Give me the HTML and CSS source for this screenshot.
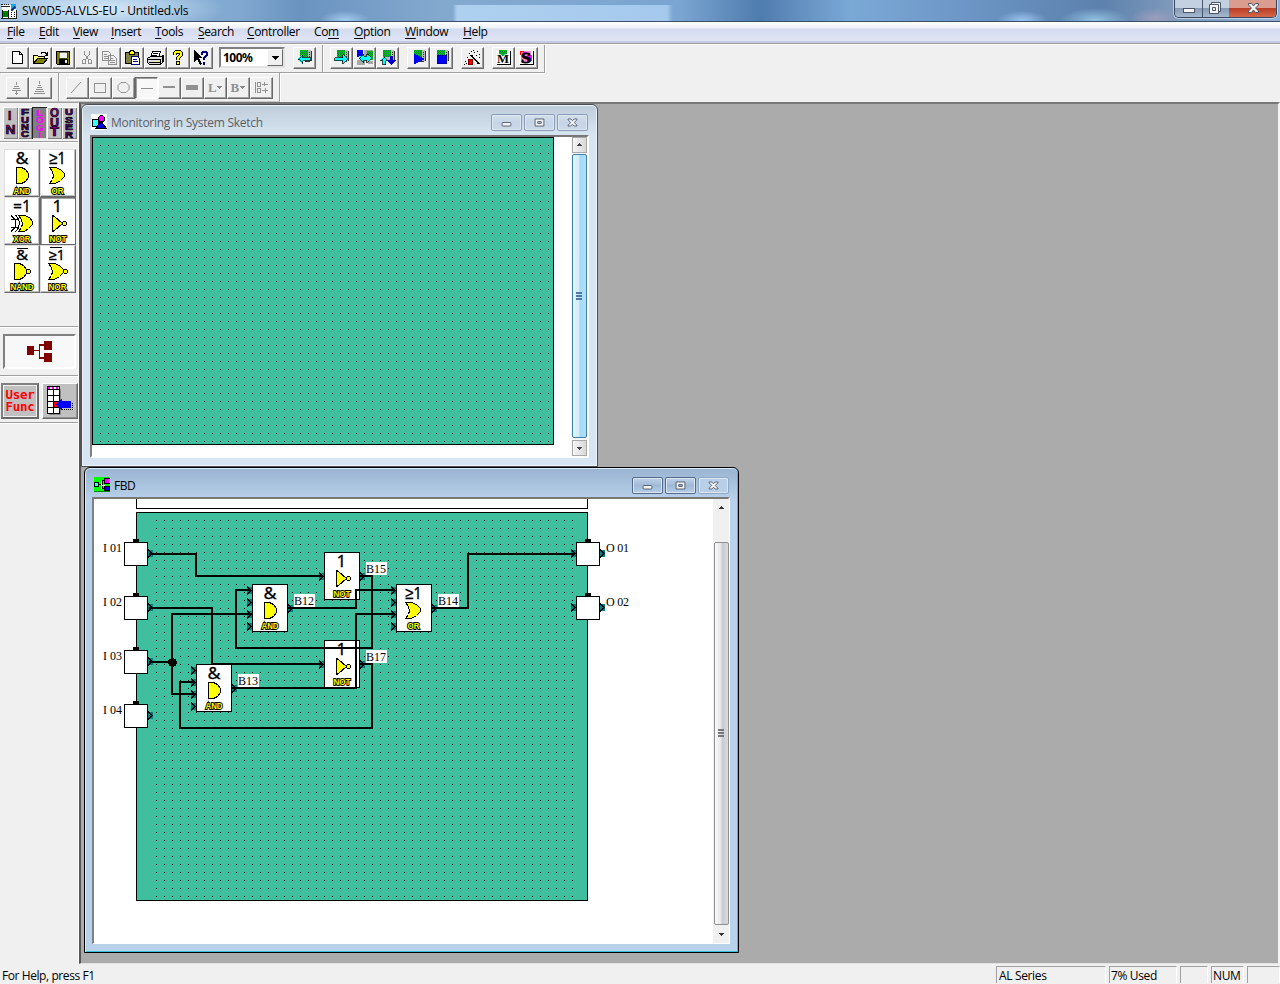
FILE: index.html
```html
<!DOCTYPE html>
<html lang="en">
<head>
<meta charset="utf-8">
<title>SW0D5-ALVLS-EU - Untitled.vls</title>
<link rel="stylesheet" href="styles.css">
</head>
<body>
<svg class="defs" width="0" height="0">
  <defs>
    <pattern id="dots1" x="8" y="8" width="8" height="8" patternUnits="userSpaceOnUse"><rect width="1" height="1"/></pattern>
    <pattern id="dots2" x="156" y="520" width="8" height="8" patternUnits="userSpaceOnUse"><rect width="1" height="1"/></pattern>
    <pattern id="dither" width="2" height="2" patternUnits="userSpaceOnUse"><path d="M0 0h2v2H0z" fill="#00c800"/><path d="M0 0h1v1H0zM1 1h1v1H1z" fill="#008040"/></pattern>
    <symbol id="g-and" viewBox="0 0 36 48">
      <text class="op" x="11.500" y="15" textLength="13" lengthAdjust="spacingAndGlyphs">&amp;</text>
      <path class="gate" d="M12.500 18.500h5l4 2 3 4v4l-3 4-4 2h-5z"/>
      <text class="gname" x="9.500" y="45" textLength="17" lengthAdjust="spacingAndGlyphs">AND</text>
    </symbol>
    <symbol id="g-or" viewBox="0 0 36 48">
      <text class="op" x="9" y="15" textLength="17" lengthAdjust="spacingAndGlyphs">≥1</text>
      <path class="gate" d="M9.500 18.500h6l5 2 4 4v3l-4 4-5 3h-6l3-4 1-4-1-4z"/>
      <text class="gname" x="11.500" y="45" textLength="12" lengthAdjust="spacingAndGlyphs">OR</text>
    </symbol>
    <symbol id="g-xor" viewBox="0 0 36 48">
      <text class="op" x="9" y="15" textLength="18" lengthAdjust="spacingAndGlyphs">=1</text>
      <path class="gate" d="M14.500 18.500h6l5 2 3 4v3l-4 4-4 3h-6l3-4 1-4-1-4z"/>
      <path class="ln" d="M7 18.500l4 4M11 22v9M11 30.500l-4 4M11.500 18l3 4 1 4-1 5-3 4M7 22.500h8M7 30.500h8"/>
      <text class="gname" x="9.500" y="45" textLength="17" lengthAdjust="spacingAndGlyphs">XOR</text>
    </symbol>
    <symbol id="g-not" viewBox="0 0 36 48">
      <text class="op" x="12.500" y="15">1</text>
      <path class="gate" d="M12.500 18.500l2 1 8 7-8 7-2 1z"/><circle class="gate" cx="24.500" cy="26.500" r="2"/>
      <text class="gname" x="9.500" y="45" textLength="17" lengthAdjust="spacingAndGlyphs">NOT</text>
    </symbol>
    <symbol id="g-nand" viewBox="0 0 36 48">
      <text class="op ops" x="12" y="15" textLength="12" lengthAdjust="spacingAndGlyphs">&amp;</text><path class="ln" d="M13 3.500h11"/>
      <path class="gate" d="M10.500 18.500h5l4 2 3 4v4l-3 4-4 2h-5z"/><circle class="gate" cx="24.500" cy="26.500" r="2"/>
      <text class="gname" x="6.500" y="45" textLength="23" lengthAdjust="spacingAndGlyphs">NAND</text>
    </symbol>
    <symbol id="g-nor" viewBox="0 0 36 48">
      <text class="op ops" x="9" y="15" textLength="16" lengthAdjust="spacingAndGlyphs">≥1</text><path class="ln" d="M10 2.500h12"/>
      <path class="gate" d="M8.500 18.500h6l5 2 4 4v3l-4 4-5 3h-6l3-4 1-4-1-4z"/><circle class="gate" cx="25.500" cy="26.500" r="2"/>
      <text class="gname" x="8.500" y="45" textLength="18" lengthAdjust="spacingAndGlyphs">NOR</text>
    </symbol>
    <symbol id="pin" viewBox="0 0 5 9"><path d="M0 1h5v7H0z" fill="#008080"/><path d="M0 0h1v1h1v1h1v1h1v1h1v1H4v1H3v1H2v1H1v1H0V7h1V6h1V5h1V4H2V3H1V2H0z"/></symbol>
    <symbol id="term" viewBox="0 0 24 28"><rect x="9" y="0" width="6" height="4"/><rect x=".5" y="3.500" width="23" height="23" fill="#fff" stroke="#000"/></symbol>
    <symbol id="plc" viewBox="0 0 23 22"><path d="M8 3h8v7H8z" fill="url(#dither)"/><path d="M16 3h3v11h-9v-4h6z" fill="#b8b8b8"/><path d="M17 5h1v1h-1zM17 7h1v1h-1zM17 9h1v1h-1zM17 11h1v1h-1zM19 4h1v10h-2v1h-5v-1h6z" fill="#333"/></symbol>
    <symbol id="wmin" viewBox="0 0 31 17"><rect x="10.500" y="8.500" width="10" height="4" rx="1" class="wg"/></symbol>
    <symbol id="wmax" viewBox="0 0 31 17"><path class="wg" fill-rule="evenodd" d="M10.500 4.500h10v8h-10zM13.500 7.500v2h4v-2z"/></symbol>
    <symbol id="wx" viewBox="0 0 31 17"><path class="wg" d="M10.500 4.500h3l2 2 2-2h3v1l-3 3 3 3v1h-3l-2-2-2 2h-3v-1l3-3-3-3z"/></symbol>
  </defs>
</svg>

<header class="titlebar">
  <svg class="appicon" width="16" height="16" viewBox="0 0 16 16"><path d="M1 1h14v13H1z" fill="#fff"/><path d="M0 0h2v1H0zM3 0h1v1H3zM5 0h1v1H5zM7 0h1v1H7zM0 2h9v1H0zM0 14h15V6h1v9H0z" fill="#222"/><path d="M2 7h5v6H2z" fill="#008000"/><path d="M7.500 6v8M1.500 6v8" stroke="#111"/><path d="M10 0h5v5h-5z" fill="#09aee0"/><path d="M9 6l5-5 1 3-4 3z" fill="#00388c"/><path d="M10 8h1v1h-1zM10 10h1v1h-1zM13 8h1v1h-1zM13 10h1v1h-1zM10 12h1v1h-1zM13 12h1v1h-1z"/></svg>
  <span class="apptitle">SW0D5-ALVLS-EU - Untitled.vls</span>
  <div class="winctl">
    <span class="c1"><svg width="27" height="17" viewBox="0 0 27 17"><rect x="8.500" y="8.500" width="11" height="4" class="wg"/></svg></span>
    <span class="c2"><svg width="26" height="17" viewBox="0 0 26 17"><path class="wg" d="M8.500 2.500h9v9h-9z"/><path class="wg" fill-rule="evenodd" d="M6.500 4.500h9v9h-9zM9.500 7.500v3h3v-3z"/></svg></span>
    <span class="c3"><svg width="47" height="17" viewBox="0 0 47 17"><path class="wg" d="M19.500 3.500h3l2 2.500 2-2.500h3v1.500l-3 3 3 3v1.500h-3l-2-2.500-2 2.500h-3V11l3-3-3-3z"/></svg></span>
  </div>
</header>

<nav class="menu">
  <span><u>F</u>ile</span><span><u>E</u>dit</span><span><u>V</u>iew</span><span><u>I</u>nsert</span><span><u>T</u>ools</span><span><u>S</u>earch</span><span><u>C</u>ontroller</span><span>Co<u>m</u></span><span><u>O</u>ption</span><span><u>W</u>indow</span><span><u>H</u>elp</span>
</nav>

<div class="bar bar1">
  <div class="grp">
    <i class="tb"><svg viewBox="0 0 23 22"><path d="M6.500 4.500h7l3 3v9h-10z" fill="#fff" stroke="#000"/><path d="M13.500 4.500v3h3" class="ln"/></svg></i>
    <i class="tb"><svg viewBox="0 0 23 22"><path d="M4.500 16V8.500h4l1 1h6v2" fill="#ff8" stroke="#000"/><path d="M4.500 16.500l4-5h10l-4 5z" fill="#808000" stroke="#000"/><path class="ln" d="M12 6.500l1-1h3l2 2M18.500 5v3h-3"/></svg></i>
    <i class="tb"><svg viewBox="0 0 23 22"><path d="M4.500 4.500h13v13h-12l-1-1z" fill="#808000" stroke="#000"/><path d="M7 5h8v6H7z" fill="#f0f0f0" stroke="#000" stroke-width=".5"/><path d="M7 12h9v5H7z"/><path d="M13 13h2v3h-2z" fill="#eee"/></svg></i>
    <i class="tb"><svg viewBox="0 0 23 22"><path class="gl" d="M9.500 4v3l4 6M14.500 4v3l-4 6M8.500 12.500h2v4h-3v-3zM13.500 12.500h2l1 1v3h-3z"/></svg></i>
    <i class="tb"><svg viewBox="0 0 23 22"><path class="gl" fill="#eee" d="M4.500 4.500h6l2 2v7h-8zM10.500 8.500h5l3 3v6h-8zM6 7.500h3M6 9.500h4M6 11.500h4M12 11.500h3M12 13.500h5M12 15.500h5"/></svg></i>
    <i class="tb"><svg viewBox="0 0 23 22"><path d="M4.500 5.500h13v11h-13z" fill="#808040" stroke="#000"/><path d="M8.500 5.500l1-2h3l1 2v2h-5z" fill="#ff0" stroke="#000"/><path d="M10.500 9.500h6l2 2v6h-8z" fill="#fff" stroke="#000080"/><path d="M12 12.500h4M12 14.500h5" stroke="#000080"/></svg></i>
    <i class="tb"><svg viewBox="0 0 23 22"><path d="M8.500 4.500h8l-2 6h-8z" fill="#fff" stroke="#000"/><path d="M3.500 11.500l3-2h11l2-1v6l-3 3h-11l-2-2z" fill="#ddd" stroke="#000"/><path class="ln" d="M4 12.500h12M5 15.500h12M9 6.500h5M8 8.500h5M16.500 12v5M18.500 9v6"/><path d="M11 14h3v1h-3z" fill="#ff0"/></svg></i>
    <i class="tb"><svg viewBox="0 0 23 22"><path d="M8 8V6l1-1h4l1 1v2l-3 3v2" fill="none" stroke="#000" stroke-width="3.500"/><path d="M8 8V6l1-1h4l1 1v2l-3 3v2" fill="none" stroke="#ff0" stroke-width="1.500"/><path d="M9 14h4v4H9z"/><path d="M10 15h2v2h-2z" fill="#ff0"/></svg></i>
    <i class="tb"><svg viewBox="0 0 23 22"><path d="M4 3v12l3-3 3 6 2-1-3-6h4z"/><path d="M12 8V6l1-1h3l1 1v2l-3 3v2M14 14.500v3" fill="none" stroke="#000080" stroke-width="2.400"/></svg></i>
    <div class="combo"><b>100%</b><i><svg width="15" height="16" viewBox="0 0 15 16"><path d="M4 6h7l-3.500 4z"/></svg></i></div>
    <i class="tb"><svg viewBox="0 0 23 22"><use href="#plc" x="-1" width="23" height="22"/><path class="cy" d="M4.500 12l5-4.500v3h8v3h-8v3z"/></svg></i>
  </div>
  <div class="grp g2">
    <i class="tb"><svg viewBox="0 0 23 22"><use href="#plc" x="-1" width="23" height="22"/><path class="cy" d="M17.500 12l-5-4.500v3h-8v3h8v3z"/></svg></i>
    <i class="tb"><svg viewBox="0 0 23 22"><path d="M4 3h6v5l-5 2H4z" fill="#00f"/><path d="M11 3h9v6h-9zM4 13h8v5H4zM15 14h5v3h-5z" fill="#a8a8a8"/><path d="M14 4h6v9h-6z" fill="url(#dither)"/><path class="cy" d="M5.500 11l5-4v2h3V7l5 4-5 5v-3h-3v3z"/></svg></i>
    <i class="tb"><svg viewBox="0 0 23 22"><use href="#plc" x="-1" width="23" height="22"/><path class="cy" d="M8 9.500l-4 4h2.500v4h3v-4H12z"/><path d="M14 9h3v4h3l-4.500 5-4.500-5h3z" fill="#00c"/></svg></i>
    <i class="tb s8"><svg viewBox="0 0 23 22"><use href="#plc" x="-1" width="23" height="22"/><path d="M6.500 6l11 6-11 6z" fill="#00f"/></svg></i>
    <i class="tb"><svg viewBox="0 0 23 22"><use href="#plc" x="-1" width="23" height="22"/><path d="M7.500 8.500h9v8h-9z" fill="#00f" stroke="#00a" /></svg></i>
    <i class="tb s8"><svg viewBox="0 0 23 22"><path d="M7.500 12.500h4v5h-4z" fill="red" stroke="#800000"/><path d="M10 8l8 9" stroke="#000" stroke-width="1.600"/><path d="M8 6h1v1H8zM10 4h1v1h-1zM13 5h1v1h-1zM16 4h1v1h-1zM15 8h1v1h-1zM18 7h1v1h-1zM18 10h1v1h-1zM6 10h1v1H6zM4 14h1v1H4zM5 16h1v1H5zM3 17h1v1H3zM12 3h1v1h-1z"/></svg></i>
    <i class="tb s8"><svg viewBox="0 0 23 22"><path d="M4 4h14v13H4z" fill="#fff"/><path d="M7 3h8v6H7z" fill="url(#dither)"/><path d="M18 4h1v14H5v-1h13z"/><text x="5" y="16" class="ms" textLength="12" lengthAdjust="spacingAndGlyphs">M</text></svg></i>
    <i class="tb"><svg viewBox="0 0 23 22"><path d="M4 4h14v13H4z" fill="#fff"/><path d="M6 4h10v11H6z" fill="#f8c"/><path d="M12 8h5v6h-5zM8 5h4v2H8z" fill="#f0f"/><path d="M5.500 8V4.500H9" stroke="#f00" fill="none"/><path d="M18 4h1v14H5v-1h13z"/><text x="6" y="16" class="ms big" textLength="10" lengthAdjust="spacingAndGlyphs">S</text></svg></i>
  </div>
</div>

<div class="bar bar2">
  <div class="grp">
    <i class="tb"><svg viewBox="0 0 23 22"><path class="gl" d="M10.500 5v3M8 9.500h5M7 11.500h7M6 13.500h9M10.500 14v4M9 16.500h3"/></svg></i>
    <i class="tb"><svg viewBox="0 0 23 22"><path class="gl" d="M10.500 4v3M9 8.500h3M8 10.500h5M7 12.500h7M6 14.500h9M5 16.500h11"/></svg></i>
  </div>
  <div class="grp g2">
    <i class="tb"><svg viewBox="0 0 23 22"><path class="gl aa" d="M5 16L15 5"/></svg></i>
    <i class="tb"><svg viewBox="0 0 23 22"><path class="gl" d="M5.500 6.500h11v9h-11z"/></svg></i>
    <i class="tb"><svg viewBox="0 0 23 22"><path class="gl aa" d="M9 5.500h5l3 3v4l-3 3H9l-3-3v-4z"/></svg></i>
    <i class="tb on"><svg viewBox="0 0 23 22"><path class="gl" d="M6 11.500h12"/></svg></i>
    <i class="tb"><svg viewBox="0 0 23 22"><path class="gl" d="M5 10h12" stroke-width="2"/></svg></i>
    <i class="tb"><svg viewBox="0 0 23 22"><path class="gl" d="M5 10.500h12" stroke-width="5"/></svg></i>
    <i class="tb"><svg viewBox="0 0 23 22"><text class="lb" x="4" y="15">L</text><path d="M13 9h5l-2.500 3z" fill="#888"/></svg></i>
    <i class="tb"><svg viewBox="0 0 23 22"><text class="lb" x="3.500" y="15">B</text><path d="M13 9h5l-2.500 3z" fill="#888"/></svg></i>
    <i class="tb"><svg viewBox="0 0 23 22"><path class="gl" d="M5.500 5v11M7.500 5.500h3v4h-3zM7.500 11.500h3v4h-3zM12 7.500h6M12 13.500h6M14.500 5v4M15.500 11v5"/></svg></i>
  </div>
</div>

<main>
  <aside>
    <div class="tabs">
      <svg width="15" height="32" viewBox="0 0 15 32"><text class="m" x="5" y="13" >I</text><text class="m" x="2.500" y="27" textLength="10" lengthAdjust="spacingAndGlyphs">N</text></svg>
      <svg width="14" height="32" viewBox="0 0 14 32"><text x="3" y="8" textLength="8" lengthAdjust="spacingAndGlyphs">F</text><text x="3" y="15.500" textLength="8" lengthAdjust="spacingAndGlyphs">U</text><text x="3" y="23" textLength="8" lengthAdjust="spacingAndGlyphs">N</text><text x="3" y="30" textLength="8" lengthAdjust="spacingAndGlyphs">C</text></svg>
      <svg class="sel" width="15" height="32" viewBox="0 0 15 32"><text x="4" y="8.500" textLength="8" lengthAdjust="spacingAndGlyphs">L</text><text x="4" y="16" textLength="8" lengthAdjust="spacingAndGlyphs">O</text><text x="4" y="23.500" textLength="8" lengthAdjust="spacingAndGlyphs">G</text><text x="6.500" y="31">I</text></svg>
      <svg width="15" height="32" viewBox="0 0 15 32"><text class="m" x="3" y="10" textLength="9" lengthAdjust="spacingAndGlyphs">O</text><text class="m" x="3" y="19.500" textLength="9" lengthAdjust="spacingAndGlyphs">U</text><text class="m" x="3" y="29" textLength="9" lengthAdjust="spacingAndGlyphs">T</text></svg>
      <svg width="15" height="32" viewBox="0 0 15 32"><text x="3" y="8" textLength="8" lengthAdjust="spacingAndGlyphs">U</text><text x="3" y="15.500" textLength="8" lengthAdjust="spacingAndGlyphs">S</text><text x="3" y="23" textLength="8" lengthAdjust="spacingAndGlyphs">E</text><text x="3" y="30.500" textLength="8" lengthAdjust="spacingAndGlyphs">R</text></svg>
    </div>
    <div class="palette">
      <div><svg><use href="#g-and"/></svg></div><div><svg><use href="#g-or"/></svg></div>
      <div><svg><use href="#g-xor"/></svg></div><div class="on"><svg><use href="#g-not"/></svg></div>
      <div><svg><use href="#g-nand"/></svg></div><div><svg><use href="#g-nor"/></svg></div>
    </div>
    <div class="tree"><div><svg width="69" height="31" viewBox="1 1 69 31"><g fill="#800000"><path d="M23 11h7v9h-7zM40 6h8v9h-8zM40 18h8v9h-8z"/><path d="M30 15h6v1h-6zM35 9h5v2h-4v11h4v2h-5z"/></g></svg></div></div>
    <div class="user">
      <div class="uf">User<br>Func</div>
      <div class="tbl"><svg width="33" height="32" viewBox="0 0 33 32"><path d="M6 5h12v26H6z" fill="#888"/><path d="M4.500 2.500h12v27h-12z" fill="#fff" stroke="#000"/><path class="ln" d="M4 5.500h13M4 11.500h13M4 17.500h13M4 23.500h13M10.500 5v24"/><path d="M5 3h2v2H5zM9 3h2v2H9zM13 3h2v2h-2z" fill="#f0f"/><path d="M11 18h5v5h-5z" fill="red"/><path d="M13 20.500l6-6.500v3h9v7h-9v3z" fill="#00f"/><path d="M19 25.500h10V18" fill="none" stroke="#000" stroke-dasharray="1 1"/></svg></div>
    </div>
  </aside>

  <section class="desk">
    <div class="win w1">
      <div class="wt"><svg width="16" height="16" viewBox="0 0 16 16"><path d="M0 0h16v16H0z" fill="#fff"/><circle cx="10.500" cy="4.500" r="3" fill="#f0f" stroke="#000"/><path d="M1.500 5.500h6v7h-6z" fill="#3ff" stroke="#000"/><path d="M10 7l5 7H5z" fill="#00d" stroke="#000"/></svg><span>Monitoring in System Sketch</span>
        <div class="wb"><svg><use href="#wmin"/></svg><svg><use href="#wmax"/></svg><svg><use href="#wx"/></svg></div></div>
      <div class="client">
        <svg class="sketch" width="462" height="308" viewBox="0 0 462 308"><rect x=".5" y=".5" width="461" height="307" fill="#40bf9f" stroke="#000"/><rect x="8" y="8" width="449" height="297" fill="url(#dots1)"/></svg>
        <div class="sb"><div class="sbb"><svg width="13" height="14" viewBox="0 0 13 14"><path d="M3 8l3.500-3L10 8z" fill="#444"/></svg></div><div class="thumb blue"><svg width="9" height="9" viewBox="0 0 9 9"><path d="M1 0h6v2H1zM1 3h6v2H1zM1 6h6v2H1z" fill="#4b7ba5"/></svg></div><div class="sbb"><svg width="13" height="14" viewBox="0 0 13 14"><path d="M3 6l3.500 3L10 6z" fill="#444"/></svg></div></div>
      </div>
    </div>

    <div class="win w2">
      <div class="wt"><svg width="16" height="16" viewBox="0 0 16 16"><path d="M0 0h16v15H0z" fill="#0f0"/><path d="M0 14.500h16" stroke="#080"/><path d="M4 7.500h4M8 3.500h3M8.500 3v9M8 11.500h3M10 1.500h6v5h-6z" fill="none" stroke="#000"/><path d="M11 2h4v4h-4z" fill="#f0f"/><path d="M.5 5.500h4v4h-4z" fill="#3ff" stroke="#000"/><path d="M10.500 9.500h5v4h-5z" fill="#00d" stroke="#000"/><path d="M7.500 4v8M8 8.500h3" stroke="#fff"/></svg><span>FBD</span>
        <div class="wb"><svg><use href="#wmin"/></svg><svg><use href="#wmax"/></svg><svg><use href="#wx"/></svg></div></div>
      <div class="client">
        <svg class="fbd" width="619" height="444" viewBox="94 499 619 444">
          <path class="ln" d="M136.500 499v9.500h451V499"/>
          <rect x="136.500" y="512.500" width="451" height="388" fill="#40bf9f" stroke="#000"/>
          <rect x="156" y="520" width="417" height="377" fill="url(#dots2)"/>
          <g>
            <use href="#term" x="124" y="539" width="24" height="28"/><use href="#term" x="124" y="593" width="24" height="28"/><use href="#term" x="124" y="647" width="24" height="28"/><use href="#term" x="124" y="701" width="24" height="28"/>
            <use href="#term" x="576" y="539" width="24" height="28"/><use href="#term" x="576" y="593" width="24" height="28"/>
          </g>
          <g>
            <use href="#pin" x="148" y="549" width="5" height="9"/><use href="#pin" x="148" y="603" width="5" height="9"/><use href="#pin" x="148" y="657" width="5" height="9"/><use href="#pin" x="148" y="711" width="5" height="9"/>
            <use href="#pin" x="571" y="549" width="5" height="9"/><use href="#pin" x="571" y="603" width="5" height="9"/><use href="#pin" x="600" y="549" width="5" height="9"/><use href="#pin" x="600" y="603" width="5" height="9"/>
            <use href="#pin" x="247" y="586" width="5" height="9"/><use href="#pin" x="247" y="598" width="5" height="9"/><use href="#pin" x="247" y="610" width="5" height="9"/><use href="#pin" x="247" y="622" width="5" height="9"/><use href="#pin" x="288" y="604" width="5" height="9"/>
            <use href="#pin" x="191" y="666" width="5" height="9"/><use href="#pin" x="191" y="678" width="5" height="9"/><use href="#pin" x="191" y="690" width="5" height="9"/><use href="#pin" x="191" y="702" width="5" height="9"/><use href="#pin" x="232" y="684" width="5" height="9"/>
            <use href="#pin" x="391" y="586" width="5" height="9"/><use href="#pin" x="391" y="598" width="5" height="9"/><use href="#pin" x="391" y="610" width="5" height="9"/><use href="#pin" x="391" y="622" width="5" height="9"/><use href="#pin" x="432" y="604" width="5" height="9"/>
            <use href="#pin" x="319" y="572" width="5" height="9"/><use href="#pin" x="360" y="572" width="5" height="9"/><use href="#pin" x="319" y="660" width="5" height="9"/><use href="#pin" x="360" y="660" width="5" height="9"/>
          </g>
          <g fill="#fff" stroke="#000"><path d="M324.500 552.500h35v47h-35zM324.500 640.500h35v47h-35zM252.500 584.500h35v47h-35zM196.500 664.500h35v47h-35zM396.500 584.500h35v47h-35z"/></g>
          <use href="#g-not" x="324" y="552" width="36" height="48"/><use href="#g-not" x="324" y="640" width="36" height="48"/><use href="#g-and" x="252" y="584" width="36" height="48"/><use href="#g-and" x="196" y="664" width="36" height="48"/><use href="#g-or" x="396" y="584" width="36" height="48"/>
          <g fill="none" stroke="#000" stroke-width="2">
            <path d="M149 554H196V576H323M149 608H212V664H323M149 662H172M252 614H172V694H196M288 608H356V590H395M232 688H356V614H395M360 576H372V648H236V590H251M360 664H372V728H180V682H195M432 608H468V554H575"/>
          </g>
          <circle cx="172.500" cy="662.500" r="4.500"/>
          <g fill="#fff"><path d="M366 562h21v13h-21zM294 594h21v13h-21zM438 594h21v13h-21zM366 650h21v13h-21zM238 674h21v13h-21z"/></g>
          <g class="lbl">
            <text x="366" y="573" textLength="20">B15</text><text x="294" y="605" textLength="20">B12</text><text x="438" y="605" textLength="20">B14</text><text x="366" y="661" textLength="20">B17</text><text x="238" y="685" textLength="20">B13</text>
            <text x="103" y="552" textLength="19">I 01</text><text x="103" y="606" textLength="19">I 02</text><text x="103" y="660" textLength="19">I 03</text><text x="103" y="714" textLength="19">I 04</text>
            <text x="606" y="552" textLength="23">O 01</text><text x="606" y="606" textLength="23">O 02</text>
          </g>
        </svg>
        <div class="sb"><div class="sbb"><svg width="15" height="16" viewBox="0 0 15 16"><path d="M4 10l3.500-3L11 10z" fill="#333"/></svg></div><div class="thumb"><svg width="9" height="9" viewBox="0 0 9 9"><path d="M1 0h6v2H1zM1 3h6v2H1zM1 6h6v2H1z" fill="#777"/></svg></div><div class="sbb"><svg width="15" height="16" viewBox="0 0 15 16"><path d="M4 8l3.500 3L11 8z" fill="#333"/></svg></div></div>
      </div>
    </div>
  </section>
</main>

<footer><span class="hint">For Help, press F1</span><span class="p1">AL Series</span><span class="p2">7% Used</span><span class="p3"></span><span class="p4">NUM</span><span class="p5"></span></footer>
</body>
</html>
```
FILE: styles.css
```css
* { box-sizing: border-box; }
body { margin: 0; width: 1280px; height: 984px; display: flex; flex-direction: column; overflow: hidden; background: #f0f0f0; font: 12px/16px "Open Sans", "Noto Sans", sans-serif; letter-spacing: -0.35px; color: #000; }
svg { display: block; flex: none; shape-rendering: crispEdges; }
.defs { position: absolute; }
.ln { fill: none; stroke: #000; }
.gl { fill: none; stroke: #909090; }
.aa { shape-rendering: auto; }
.cy { fill: #0ff; stroke: #000; stroke-width: .7; }
.wg { fill: #f4f4f4; stroke: #4b5468; shape-rendering: auto; }

.titlebar { height: 22px; flex: none; display: flex; align-items: flex-start; padding: 3px 3px 0 1px; border-bottom: 1px solid #3c4d66;
  background:
    radial-gradient(ellipse 125px 24px at 100px 9px, rgba(225,240,252,.9), rgba(190,220,245,.6) 60%, transparent),
    linear-gradient(90deg, transparent, rgba(185,218,248,.8) 4px, rgba(175,210,243,.8) 214px, transparent) 453px 5px / 220px 17px no-repeat,
    radial-gradient(ellipse 25px 9px at 345px 20px, rgba(175,215,248,.8), transparent),
    radial-gradient(ellipse 25px 9px at 1022px 20px, rgba(160,200,245,.9), transparent),
    radial-gradient(ellipse 35px 12px at 1095px 20px, rgba(150,200,230,.9), transparent),
    radial-gradient(ellipse 25px 10px at 1155px 18px, rgba(165,160,190,.8), transparent),
    linear-gradient(90deg, #9dbbd9, #80a8d0 240px, #6a93c0 300px, #84a9cf 440px, #7aa5d2 680px, #4f7cae 760px, #7ba9d6 850px, #6d97c6 960px, #5c81ad 1100px, #7d98ba 1170px, #8fb0d4); }
.appicon { margin-top: 1px; }
.apptitle { margin-left: 5px; line-height: 16px; flex: 1; letter-spacing: -0.12px; }
.winctl { display: flex; height: 18px; margin-top: -3px; border: 1px solid #39455a; border-top: 0; border-radius: 0 0 5px 5px; overflow: hidden; box-shadow: 0 0 0 1px rgba(225,240,255,.6); }
.winctl span { height: 17px; }
.c1, .c2 { background: linear-gradient(#c3d0df 45%, #8598b2 46%, #a5b9cf); }
.c2 { border: solid #4b5870; border-width: 0 0 0 1px; }
.c3 { background: linear-gradient(#d99c8e 45%, #b83a22 46%, #d5674a); }

.menu { height: 21px; flex: none; display: grid; grid-template-columns: 32px 34px 38px 44px 43px 49px 67px 40px 51px 58px 30px; padding: 2px 0 0 7px; background: linear-gradient(#fff, #eef1f8 6px, #d5dcef 7px, #dfe4f6 18px); border-bottom: 2px solid #c3cbe0; white-space: nowrap; }
.menu u { text-underline-offset: 2px; }

.bar { height: 30px; flex: none; display: flex; }
.bar1 { border-top: 1px solid #a0a0a0; box-shadow: inset 0 1px #fff; padding-top: 1px; height: 30px; }
.bar2 { height: 29px; }
.grp { display: flex; padding: 2px 7px 0 6px; border-right: 1px solid #a0a0a0; border-bottom: 1px solid #a0a0a0; box-shadow: 1px 1px #fff; height: 28px; }
.bar2 .grp { padding: 4px 6px 0; height: 29px; border-bottom-color: #c8c8c8; }
.bar2 .g2 { padding-left: 7px; }
.bar1 .grp:first-child { padding-right: 6px; }
.bar1 .g2 { padding: 2px 6px 0 7px; }
.tb { width: 23px; height: 22px; flex: none; border: 1px solid; border-color: #fff #696969 #696969 #fff; box-shadow: inset -1px -1px #a0a0a0; background: #f0f0f0; }
.tb svg { width: 23px; height: 22px; margin: -1px; }
.tb.on { border-color: #696969 #fff #fff #696969; box-shadow: inset 1px 1px #a0a0a0; background: #f8f8f8; }
.s8 { margin-left: 8px; }
.ms { font: bold 12px "Liberation Serif", serif; letter-spacing: 0; stroke: #fff; stroke-width: 1.5px; paint-order: stroke; }
.ms.big { font-size: 15px; stroke: #000; stroke-width: .8px; }
.lb { font: bold 13px "Liberation Serif", serif; fill: #909090; letter-spacing: 0; }
.combo { width: 66px; height: 21px; margin: 0 8px 0 6px; display: flex; background: #fff; border: 2px solid; border-color: #808080 #e3e3e3 #e3e3e3 #808080; }
.combo b { flex: 1; font: bold 12px/17px "Noto Sans", sans-serif; letter-spacing: -.5px; padding-left: 2px; }
.combo i { width: 16px; height: 17px; background: #f0f0f0; border: 1px solid; border-color: #fff #696969 #696969 #fff; }

main { height: 862px; flex: none; display: flex; }
aside { width: 79px; flex: none; border-right: 1px solid #fff; border-top: 1px solid #a0a0a0; }
.tabs { display: flex; padding: 4px 0 0 3px; height: 39px; border-bottom: 1px solid #a0a0a0; box-shadow: 0 1px #fff; }
.tabs svg { background: #c0c0c0; box-shadow: inset 1px 1px #fff, inset -1px -1px #808080; }
.tabs .sel { background: #808080; box-shadow: inset 1px 1px #222, inset -1px -1px #ddd; }
.tabs text { font: bold 9px "Liberation Sans", sans-serif; letter-spacing: 0; fill: #900090; stroke: #000; stroke-width: .7px; }
.tabs text.m { font-size: 12px; }
.tabs .sel text { fill: #f0f; stroke: #f0f; stroke-width: .2px; }
.palette { display: grid; grid-template-columns: 36px 36px; grid-auto-rows: 48px; padding: 7px 0 0 4px; height: 185px; border-bottom: 1px solid #a0a0a0; box-shadow: 0 1px #fff; }
.palette > div { background: #fff; border: 1px solid; border-color: #e0e0e0 #696969 #696969 #e0e0e0; box-shadow: inset -1px -1px #c0c0c0; }
.palette > div.on { border-color: #696969; box-shadow: inset 1px 1px #a0a0a0; }
.palette svg { width: 36px; height: 48px; margin: -1px; }
.op { font: 17px "Noto Sans", sans-serif; letter-spacing: 0; stroke: #000; stroke-width: .3px; }
.ops { font-size: 14px; }
.gate { fill: #ff0; stroke: #000; }
.gname { font: bold 9px "Liberation Sans", sans-serif; letter-spacing: 0; fill: #ff0; stroke: #000; stroke-width: 2px; paint-order: stroke; }
.tree { padding: 7px 3px 0; height: 49px; border-bottom: 1px solid #a0a0a0; box-shadow: 0 1px #fff; }
.tree div { width: 73px; height: 35px; border: 2px solid; border-color: #808080 #fff #fff #808080; background: #f8f8f8; }
.user { display: flex; gap: 3px; padding: 7px 0 0 1px; height: 47px; border-bottom: 1px solid #a0a0a0; box-shadow: 0 1px #fff; }
.uf { width: 38px; height: 36px; background: #c0c0c0; border: 2px solid; border-color: #808080 #696969 #696969 #808080; box-shadow: inset 0 0 0 1px #f0f0f0; color: red; font: bold 12.500px/12px "DejaVu Sans Mono", monospace; letter-spacing: -.3px; text-align: center; padding-top: 4px; }
.tbl { width: 36px; height: 36px; background: #c0c0c0; border: 1px solid; border-color: #fff #696969 #696969 #fff; box-shadow: inset -1px -1px #909090; }

.desk { position: relative; flex: 1; background: #ababab; border: solid; border-width: 2px 2px 1px 2px; border-color: #777 #f4f4f4 #e3e3e3 #555; }
.win { position: absolute; border: 1px solid #4a4e55; border-radius: 6px 6px 0 0; }
.w1 { left: 0; top: 0; width: 517px; height: 363px; background: linear-gradient(#bfcddb, #d7e4f2 30px); box-shadow: inset 0 0 0 1px #eef4fa; padding: 0 8px 7px 8px; color: #5a5f66; }
.w2 { left: 3px; top: 363px; width: 655px; height: 486px; background: linear-gradient(#99b4d1, #b9d1ea 32px); border-color: #000; box-shadow: inset 0 1px #dceafa, inset 1px 0 #d8e8f8, inset -1px -1px #35c0dc; padding: 0 8px 8px 7px; }
.wt { display: flex; height: 30px; align-items: flex-start; padding: 9px 0 0 1px; }
.w2 .wt { height: 29px; padding-left: 2px; }
.wt span { flex: 1; padding-left: 4px; line-height: 17px; letter-spacing: -.26px; }
.w2 .wt span { letter-spacing: -.5px; }
.wb { display: flex; gap: 2px; padding-right: 1px; }
.wb svg { width: 31px; height: 17px; border: 1px solid #8c9cb8; border-radius: 2px; background: linear-gradient(#d5e0ee, #c5d4e6 50%, #cbd9ea); box-shadow: inset 0 0 0 1px #dde7f2; }
.w2 .wb svg { border-color: #53698e; background: linear-gradient(#bfd3ea, #9fb9d6 50%, #b6cde6); }
.w2 .wb svg:last-child { border-color: #8ea9c9; background: #b9cfe8; }
.client { display: flex; justify-content: space-between; background: #fff; border: 2px solid; border-color: #777 #fff #fff #808080; }
.w1 .client { height: 323px; }
.w2 .client { height: 447px; border-bottom-width: 1px; }
.sb { width: 16px; flex: none; display: flex; flex-direction: column; align-items: center; background: #f0f0f0; }
.w1 .sb { background: #f8f8f8; }
.thumb { flex: 1; width: 15px; border: 1px solid #8e8e93; border-radius: 2px; background: linear-gradient(90deg, #fafafa, #e6e6e8 45%, #c9cace 55%, #d9dadd); display: flex; align-items: center; justify-content: center; }
.blue { border-color: #3c7fb1; background: linear-gradient(90deg, #e6f5fd, #cfecfb 45%, #a5d9f6 55%, #b3e0f8); margin: 1px 0 2px; }
.w1 .sbb { width: 15px; height: 16px; border: 1px solid #a8a8a8; background: linear-gradient(90deg, #f5f5f5, #d8d8da); }
.w2 .sbb:first-child { height: 43px; }
.w2 .sbb:last-child { height: 18px; }
.lbl { font: 12px "Liberation Serif", serif; letter-spacing: 0; }

footer { height: 19px; flex: none; display: flex; gap: 3px; padding: 2px 0 0; }
footer span { height: 17px; line-height: 18px; padding-left: 1px; border-left: 1px solid #a0a0a0; border-top: 1px solid #a0a0a0; border-right: 1px solid #fff; }
footer .hint { border: 0; flex: 1; padding-left: 2px; letter-spacing: -.42px; line-height: 20px; }
.p1 { width: 110px; } .p2 { width: 68px; } .p3 { width: 28px; } .p4 { width: 33px; } .p5 { width: 33px; }
footer .p1 { padding-left: 2px; }
```
